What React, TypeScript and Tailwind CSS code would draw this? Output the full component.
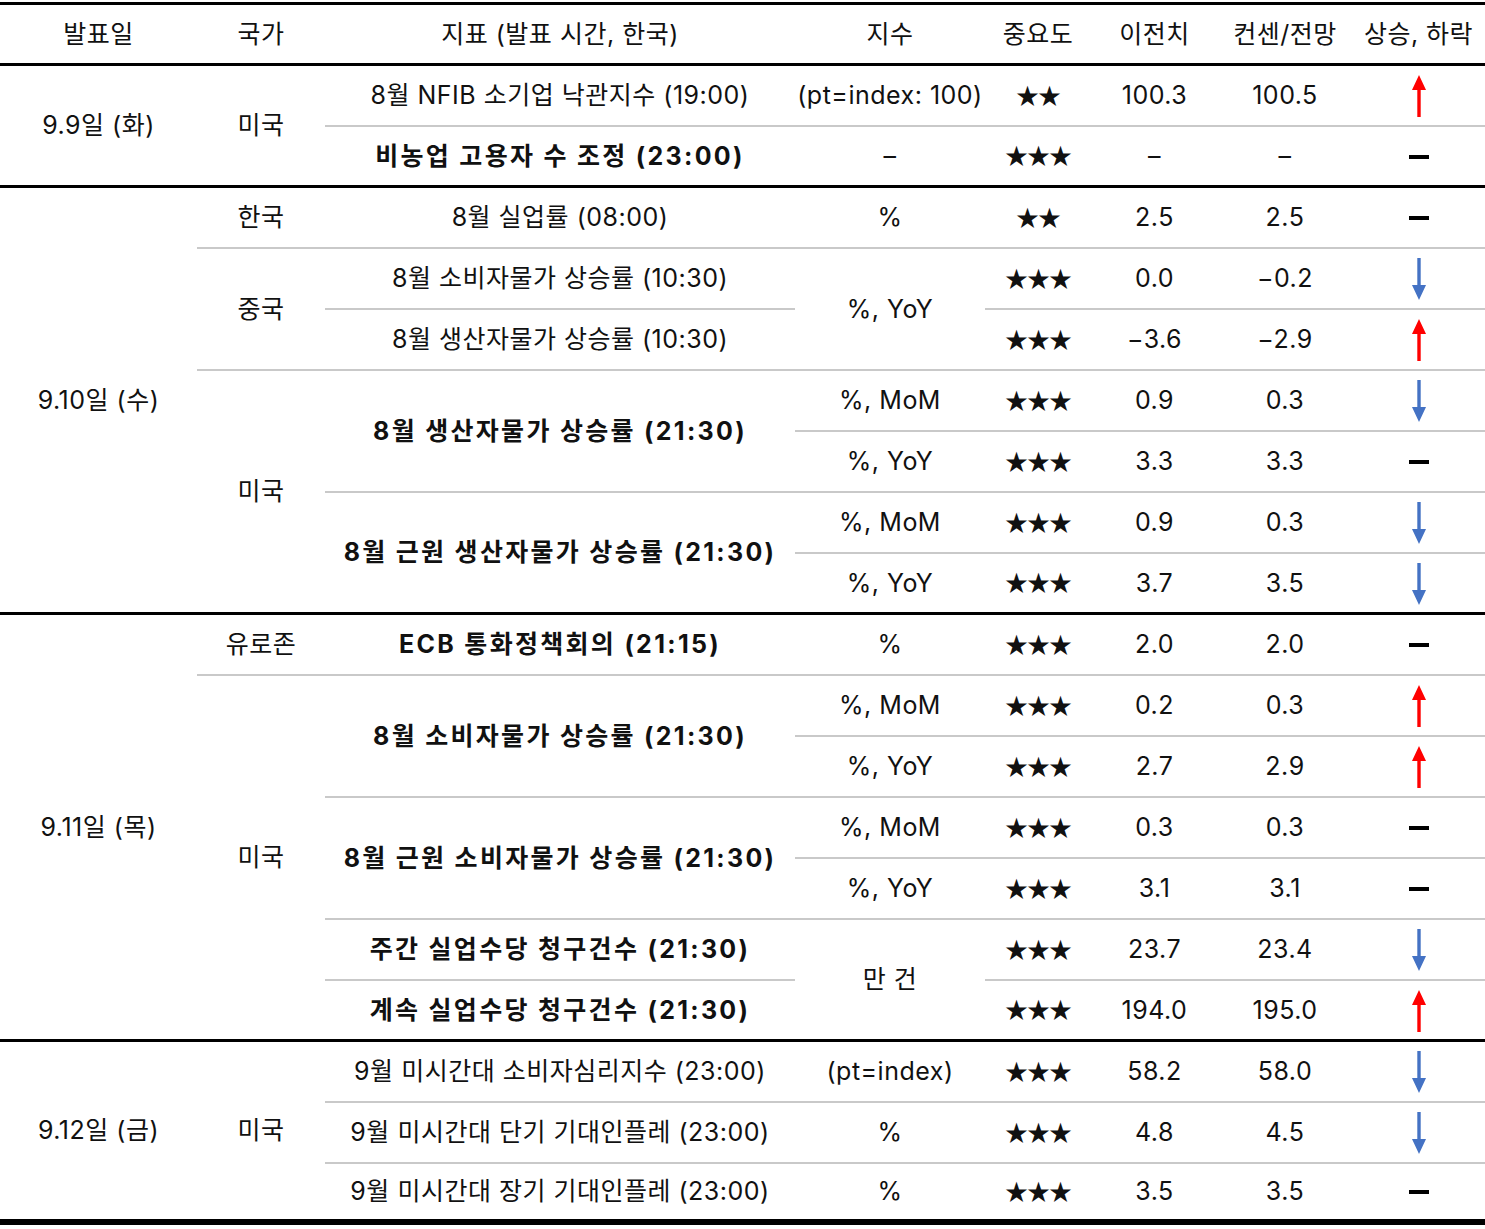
import React from "react";

type Edge = "g" | "k" | "l";

const spanCls: Record<number, string> = {
  1: "",
  2: "row-span-2",
  3: "row-span-3",
  4: "row-span-4",
  6: "row-span-6",
  7: "row-span-7",
};

const edgeCls: Record<Edge, string> = {
  g: "border-b-2 border-[#c9c9c9]",
  k: "border-b-[3px] border-black",
  l: "border-b-[6px] border-black",
};

function C(props: { children?: React.ReactNode; s?: number; e?: Edge; b?: boolean }) {
  const s = props.s ?? 1;
  const e = props.e ?? "g";
  return (
    <div
      className={`flex items-center justify-center whitespace-nowrap pt-[1px] ${spanCls[s]} ${edgeCls[e]} ${
        props.b ? "font-bold tracking-[2.3px]" : "tracking-[0.5px]"
      }`}
    >
      {props.children}
    </div>
  );
}

function Stars({ n }: { n: number }) {
  return (
    <span className="mb-[4px] font-['Noto_Sans_CJK_KR',sans-serif] text-[23px] tracking-[-1px]">
      {"★".repeat(n)}
    </span>
  );
}

function Up() {
  return (
    <svg width="16" height="42" viewBox="0 0 16 42">
      <rect x="6.3" y="11" width="3.4" height="31" fill="#ff0000" />
      <polygon points="1,15 8,0 15,15" fill="#ff0000" />
    </svg>
  );
}

function Down() {
  return (
    <svg width="16" height="42" viewBox="0 0 16 42">
      <rect x="6.3" y="0" width="3.4" height="31" fill="#4472c4" />
      <polygon points="1,27 8,42 15,27" fill="#4472c4" />
    </svg>
  );
}

function Dash() {
  return <span className="block h-[4px] w-[20px] bg-black" />;
}

// one data row: stars, 이전치, 컨센, arrow
function Tail({ n, prev, cons, dir, e }: { n: number; prev: string; cons: string; dir: "u" | "d" | "-"; e?: Edge }) {
  return (
    <>
      <C e={e}>
        <Stars n={n} />
      </C>
      <C e={e}>{prev}</C>
      <C e={e}>{cons}</C>
      <C e={e}>{dir === "u" ? <Up /> : dir === "d" ? <Down /> : <Dash />}</C>
    </>
  );
}

export default function App() {
  return (
    <div className="min-h-screen w-[1485px] bg-white pt-[2px] font-['Inter','Noto_Sans_CJK_KR',sans-serif] text-[25px] text-[#111]">
      <div className="grid grid-cols-[197px_128px_470px_190px_106px_127px_134px_133px] auto-rows-[61px] border-t-[3px] border-black">
        {/* header */}
        <C e="k">발표일</C>
        <C e="k">국가</C>
        <C e="k">지표 (발표 시간, 한국)</C>
        <C e="k">지수</C>
        <C e="k">중요도</C>
        <C e="k">이전치</C>
        <C e="k">컨센/전망</C>
        <C e="k">상승, 하락</C>

        {/* 9.9 */}
        <C s={2} e="k">9.9일 (화)</C>
        <C s={2} e="k">미국</C>
        <C>8월 NFIB 소기업 낙관지수 (19:00)</C>
        <C>(pt=index: 100)</C>
        <Tail n={2} prev="100.3" cons="100.5" dir="u" />
        <C e="k" b>비농업 고용자 수 조정 (23:00)</C>
        <C e="k">–</C>
        <Tail n={3} prev="–" cons="–" dir="-" e="k" />

        {/* 9.10 */}
        <C s={7} e="k">9.10일 (수)</C>
        <C>한국</C>
        <C>8월 실업률 (08:00)</C>
        <C>%</C>
        <Tail n={2} prev="2.5" cons="2.5" dir="-" />

        <C s={2}>중국</C>
        <C>8월 소비자물가 상승률 (10:30)</C>
        <C s={2}>%, YoY</C>
        <Tail n={3} prev="0.0" cons="−0.2" dir="d" />
        <C>8월 생산자물가 상승률 (10:30)</C>
        <Tail n={3} prev="−3.6" cons="−2.9" dir="u" />

        <C s={4} e="k">미국</C>
        <C s={2} b>8월 생산자물가 상승률 (21:30)</C>
        <C>%, MoM</C>
        <Tail n={3} prev="0.9" cons="0.3" dir="d" />
        <C>%, YoY</C>
        <Tail n={3} prev="3.3" cons="3.3" dir="-" />
        <C s={2} e="k" b>8월 근원 생산자물가 상승률 (21:30)</C>
        <C>%, MoM</C>
        <Tail n={3} prev="0.9" cons="0.3" dir="d" />
        <C e="k">%, YoY</C>
        <Tail n={3} prev="3.7" cons="3.5" dir="d" e="k" />

        {/* 9.11 */}
        <C s={7} e="k">9.11일 (목)</C>
        <C>유로존</C>
        <C b>ECB 통화정책회의 (21:15)</C>
        <C>%</C>
        <Tail n={3} prev="2.0" cons="2.0" dir="-" />

        <C s={6} e="k">미국</C>
        <C s={2} b>8월 소비자물가 상승률 (21:30)</C>
        <C>%, MoM</C>
        <Tail n={3} prev="0.2" cons="0.3" dir="u" />
        <C>%, YoY</C>
        <Tail n={3} prev="2.7" cons="2.9" dir="u" />
        <C s={2} b>8월 근원 소비자물가 상승률 (21:30)</C>
        <C>%, MoM</C>
        <Tail n={3} prev="0.3" cons="0.3" dir="-" />
        <C>%, YoY</C>
        <Tail n={3} prev="3.1" cons="3.1" dir="-" />
        <C b>주간 실업수당 청구건수 (21:30)</C>
        <C s={2} e="k">만 건</C>
        <Tail n={3} prev="23.7" cons="23.4" dir="d" />
        <C e="k" b>계속 실업수당 청구건수 (21:30)</C>
        <Tail n={3} prev="194.0" cons="195.0" dir="u" e="k" />

        {/* 9.12 */}
        <C s={3} e="l">9.12일 (금)</C>
        <C s={3} e="l">미국</C>
        <C>9월 미시간대 소비자심리지수 (23:00)</C>
        <C>(pt=index)</C>
        <Tail n={3} prev="58.2" cons="58.0" dir="d" />
        <C>9월 미시간대 단기 기대인플레 (23:00)</C>
        <C>%</C>
        <Tail n={3} prev="4.8" cons="4.5" dir="d" />
        <C e="l">9월 미시간대 장기 기대인플레 (23:00)</C>
        <C e="l">%</C>
        <Tail n={3} prev="3.5" cons="3.5" dir="-" e="l" />
      </div>
    </div>
  );
}
